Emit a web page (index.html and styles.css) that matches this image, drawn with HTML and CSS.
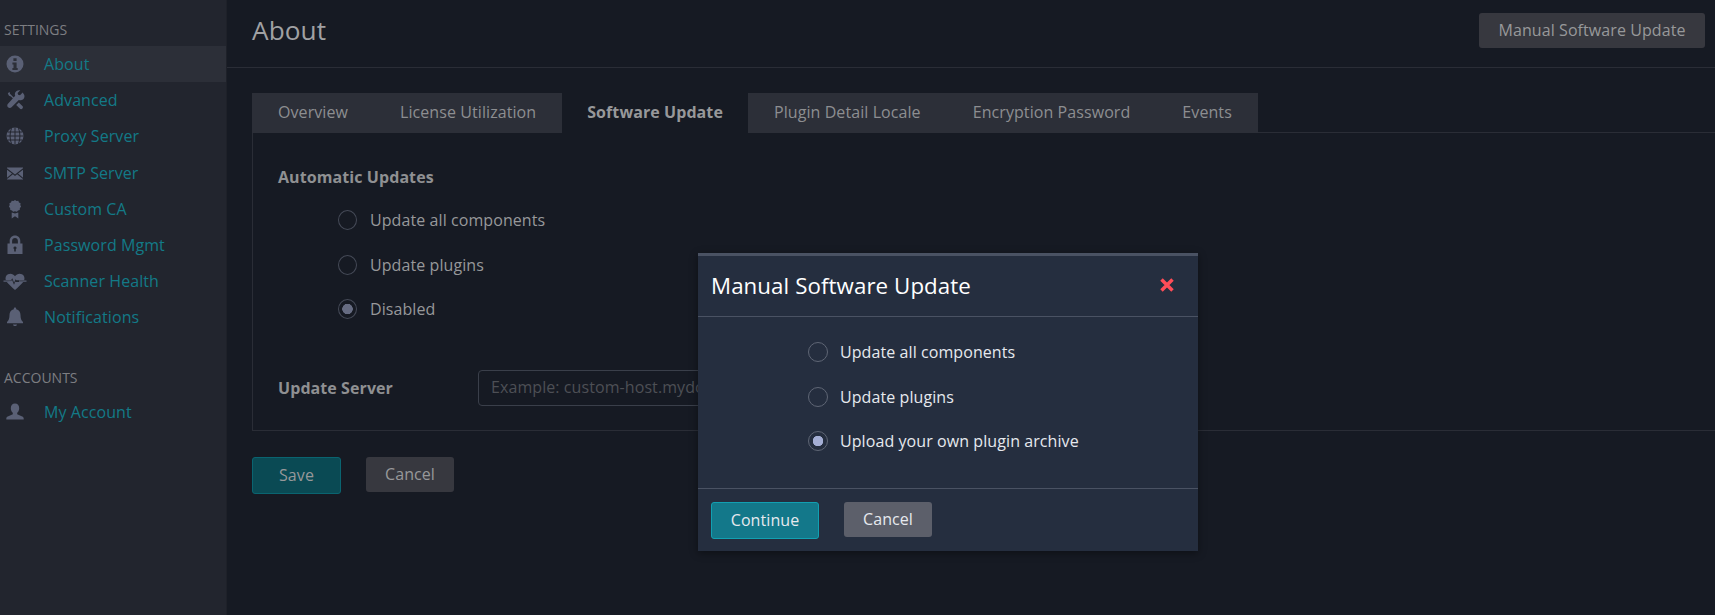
FILE: index.html
```html
<!DOCTYPE html>
<html lang="en">
<head>
<meta charset="utf-8">
<title>About</title>
<link rel="stylesheet" href="styles.css">
</head>
<body>
<div class="app">
  <aside class="sidebar">
    <div class="nav-label">SETTINGS</div>
    <nav class="nav">
      <a class="nav-item active"><svg class="nav-icon" viewBox="0 0 24 24"><path fill-rule="evenodd" d="M12 3.500a8.500 8.500 0 1 0 0 17 8.500 8.500 0 0 0 0-17zM10.400 6.200h3.200v2.800h-3.200zM9.400 10.400h4.200v5.500h1.100v2H9.400v-2h1.100v-3.500H9.400z"/></svg><span>About</span></a>
      <a class="nav-item"><svg class="nav-icon" viewBox="0 0 24 24"><path d="M6.200 4 4.800 5.400l1.200 2.400 1.900.6 3.700 3.700-1.100 1.100 1.800 1.800 1.100-1.100-1.800-1.800 1.900-1.900-1.700-1.800-1.100 1.100-3.700-3.700-.5-1.800zM19.700 4.500l-2.700 2.700-1.900-.5-.5-1.800 2.700-2.600c-2.200-.5-4.600.6-5.300 2.700-.3 1-.2 2 .2 2.800L5 15.700c-1 1-1 2.500 0 3.500s2.600.9 3.500 0l7.300-7.300c.9.400 1.900.5 2.800.2 2.200-.7 3.400-3 2.700-5.200zM15.800 14.400l-2.600 2.600 3.600 3.600c.7.700 1.900.7 2.600 0s.7-1.900 0-2.600z"/></svg><span>Advanced</span></a>
      <a class="nav-item"><svg class="nav-icon" viewBox="0 0 24 24"><circle cx="12" cy="12" r="8.500"/><path class="icon-cut" d="M12 3.500v17M8.600 4.200c-2 5-2 10.600 0 15.600M15.400 4.200c2 5 2 10.600 0 15.600M3.500 12h17M4.600 8h14.800M4.600 16h14.800"/></svg><span>Proxy Server</span></a>
      <a class="nav-item"><svg class="nav-icon" viewBox="0 0 24 24"><path d="M4 6.500h16v.7l-8 6.300-8-6.300zM4 8.800l5 3.800-5 4.100zM20 8.800l-5 3.800 5 4.100zM9.900 13.300 12 15l2.100-1.700 5.900 4.600v.6H4v-.6z"/></svg><span>SMTP Server</span></a>
      <a class="nav-item"><svg class="nav-icon" viewBox="0 0 24 24"><path d="m12 3 1.500 1 1.800-.2.700 1.600 1.600.9-.3 1.800.8 1.600-1.200 1.400-.2 1.800-1.700.5-1.100 1.300-1.900-.4-1.900.4-1.100-1.300-1.700-.5-.2-1.800-1.200-1.400.8-1.600-.3-1.800 1.600-.9.7-1.600 1.800.2z"/><path d="M8.700 15.500v6l3.300-2.300 3.300 2.300v-6l-3.300 1.100z"/></svg><span>Custom CA</span></a>
      <a class="nav-item"><svg class="nav-icon" viewBox="0 0 24 24"><path fill-rule="evenodd" d="M12 2.500c-3.200 0-5.300 2.400-5.300 5.500v2.500H4.500v10.500h15V10.500h-2.200V8c0-3.100-2.100-5.500-5.300-5.500zM12 5c1.700 0 2.900 1.300 2.900 3v2.500H9.100V8c0-1.700 1.200-3 2.900-3zM12 13.500a1.500 1.500 0 0 1 .8 2.800v2.200h-1.600v-2.200a1.500 1.500 0 0 1 .8-2.800z"/></svg><span>Password Mgmt</span></a>
      <a class="nav-item"><svg class="nav-icon" viewBox="0 0 24 24"><path d="M12 7.300C10.500 5 7.600 4 5 5.300 2.800 6.500 2 8.800 2.800 11.300H8l1.300-2 1.800 4.400 1.500-3.400.8 1H21.200c.8-2.500 0-4.800-2.200-6C16.400 4 13.500 5 12 7.300z"/><path d="M3.800 13C5.500 15.300 9 18.300 12 21c3-2.700 6.500-5.700 8.200-8h-7.400l-.4-.6-1.400 3.300-2-5-.6 1-.4.300z"/><path class="icon-line" d="M.5 12.200h7.300M16 12.200h7.500"/></svg><span>Scanner Health</span></a>
      <a class="nav-item"><svg class="nav-icon" viewBox="0 0 24 24"><path d="M12 2.500c-.7 0-1.200.5-1.200 1.200v.5C8 4.900 6.500 7 6.500 10c0 3.500-.8 5.200-2.500 7v1.200h16V17c-1.700-1.800-2.500-3.500-2.500-7 0-3-1.500-5.100-4.300-5.800v-.5c0-.7-.5-1.200-1.200-1.200zM10 19.500c.2 1 1 1.500 2 1.500s1.800-.5 2-1.500z"/></svg><span>Notifications</span></a>
    </nav>
    <div class="nav-label nav-label-spaced">ACCOUNTS</div>
    <nav class="nav">
      <a class="nav-item"><svg class="nav-icon" viewBox="0 0 24 24"><path d="M12 3.500c-2.600 0-4.200 2-4.200 4.700 0 1.900.7 3.500 2 4.500v1.500l-5 2.200c-.9.400-1.500 1.100-1.500 2.100v1h17.400v-1c0-1-.6-1.700-1.500-2.100l-5-2.200v-1.500c1.300-1 2-2.600 2-4.500 0-2.700-1.600-4.700-4.200-4.700z"/></svg><span>My Account</span></a>
    </nav>
  </aside>

  <main class="main">
    <header class="page-header">
      <h1 class="page-title">About</h1>
      <button class="btn btn-neutral btn-header" type="button">Manual Software Update</button>
    </header>
    <section class="content">
      <div class="tabs">
        <a class="tab">Overview</a>
        <a class="tab">License Utilization</a>
        <a class="tab tab-active">Software Update</a>
        <a class="tab">Plugin Detail Locale</a>
        <a class="tab">Encryption Password</a>
        <a class="tab">Events</a>
      </div>
      <div class="panel">
        <div class="field-title">Automatic Updates</div>
        <div class="radio-group">
          <label class="radio-row"><span class="radio"></span>Update all components</label>
          <label class="radio-row"><span class="radio"></span>Update plugins</label>
          <label class="radio-row"><span class="radio radio-on"></span>Disabled</label>
        </div>
        <div class="server-row">
          <div class="field-title server-label">Update Server</div>
          <input class="server-input" type="text" placeholder="Example: custom-host.mydomain.com">
        </div>
      </div>
      <div class="actions">
        <button class="btn btn-save" type="button">Save</button>
        <button class="btn btn-neutral btn-raised" type="button">Cancel</button>
      </div>
    </section>
  </main>
</div>

<div class="modal">
  <div class="modal-header">
    <h2 class="modal-title">Manual Software Update</h2>
    <svg class="modal-close" viewBox="0 0 16 16"><path d="M2.500 2.500l11 11M13.500 2.500l-11 11"/></svg>
  </div>
  <div class="modal-body">
    <label class="radio-row"><span class="radio radio-modal"></span>Update all components</label>
    <label class="radio-row"><span class="radio radio-modal"></span>Update plugins</label>
    <label class="radio-row"><span class="radio radio-modal radio-modal-on"></span>Upload your own plugin archive</label>
  </div>
  <div class="modal-footer">
    <button class="btn btn-continue" type="button">Continue</button>
    <button class="btn btn-cancel" type="button">Cancel</button>
  </div>
</div>
</body>
</html>
```

FILE: styles.css
```css
* { box-sizing: border-box; }

html, body {
  margin: 0;
  height: 100%;
  overflow: hidden;
  background: #161a23;
  font-family: "Open Sans", sans-serif;
  font-size: 16px;
  letter-spacing: 0.08px;
  color: #97989a;
}

.app { display: flex; height: 615px; }

.sidebar {
  flex: 0 0 227px;
  background: #22252e;
  border-right: 1px solid #1e2129;
  padding-top: 22px;
}

.nav-label {
  height: 16px;
  line-height: 16px;
  font-size: 14px;
  letter-spacing: 0;
  padding-left: 4px;
  margin-bottom: 8px;
  color: #7d7e82;
}
.nav-label-spaced { margin-top: 34.4px; }

.nav { display: flex; flex-direction: column; }

.nav-item {
  display: flex;
  align-items: center;
  height: 36.2px;
  padding-left: 3px;
  color: #137a87;
}
.nav-item.active { background: #2c2f38; }

.nav-icon {
  flex: none;
  width: 24px;
  height: 24px;
  margin-right: 17px;
  fill: #5a6075;
}
.icon-cut { fill: none; stroke: #22252e; stroke-width: 1; }
.icon-line { fill: none; stroke: #5a6075; stroke-width: 1.2; }

.main { flex: 1; min-width: 0; }

.page-header {
  display: flex;
  align-items: center;
  justify-content: space-between;
  height: 68px;
  padding: 0 10px 7px 25px;
  border-bottom: 1px solid #2a2d36;
}
.page-title {
  margin: 0;
  font-size: 26.2px;
  font-weight: 400;
  color: #a0a1a3;
}

.btn {
  display: block;
  height: 35px;
  padding: 0;
  border: 0;
  border-radius: 3px;
  font: 400 16px "Open Sans", sans-serif;
  letter-spacing: inherit;
  cursor: pointer;
}
.btn-neutral { width: 88px; background: #37383f; color: #97989a; }
.btn-header { width: 226px; }
.btn-raised { padding-bottom: 2px; }
.btn-save {
  width: 89px;
  height: 37px;
  padding-bottom: 2px;
  background: #0a4a54;
  border: 1px solid #0a6470;
  color: #97989a;
}
.btn-continue {
  width: 108px;
  height: 37px;
  padding-bottom: 2px;
  background: #13788a;
  border: 1px solid #12a0b2;
  color: #e6e9ee;
}
.btn-cancel { width: 88px; padding-bottom: 2px; background: #5c5f6a; color: #e6e9ee; }

.content { padding-top: 25px; padding-left: 25px; }

.tabs { display: flex; position: relative; z-index: 1; margin-bottom: -1px; width: max-content; }
.tab {
  height: 40px;
  line-height: 38px;
  padding: 0 26px;
  background: #2c2f38;
  color: #8d8e91;
  white-space: nowrap;
}
.tab-active { background: #161a23; color: #97989a; font-weight: 700; padding: 0 25px; }

.panel {
  height: 299px;
  padding: 32px 25px 0;
  border: 1px solid #2a2d36;
  border-right: 0;
}

.field-title { line-height: 24px; font-weight: 700; color: #8f9092; }

.radio-group { padding: 9px 0 0 60px; }

.radio-row {
  display: flex;
  align-items: center;
  height: 44.5px;
}

.radio {
  flex: none;
  width: 19px;
  height: 20px;
  margin-right: 13px;
  border: 1px solid #454a57;
  border-radius: 50%;
}
.radio-on { background: radial-gradient(circle, #666c82 0 5px, transparent 5.5px); }

.server-row { display: flex; align-items: center; margin-top: 38px; }
.server-label { flex: 0 0 200px; }
.server-input {
  width: 500px;
  height: 36px;
  padding: 0 12px 2px;
  border: 1px solid #3a3f4a;
  border-radius: 4px;
  background: transparent;
  font: 400 16px "Open Sans", sans-serif;
  letter-spacing: inherit;
  outline: none;
}
.server-input::placeholder { color: #4d4f55; opacity: 1; }

.actions { display: flex; align-items: flex-start; gap: 25px; margin-top: 26px; }

.modal {
  position: absolute;
  left: 698px;
  top: 253px;
  width: 500px;
  height: 298px;
  background: #252e3f;
  border-top: 3px solid #4a5263;
  box-shadow: 0 2px 8px rgba(0, 0, 0, 0.4);
  color: #e6e9ee;
}
.modal-header {
  display: flex;
  align-items: center;
  justify-content: space-between;
  height: 61px;
  padding: 0 23px 2px 13px;
  border-bottom: 1px solid #4a5263;
}
.modal-title { margin: 0; font-size: 22.3px; font-weight: 400; color: #fff; }
.modal-close { width: 16px; height: 16px; fill: none; stroke: #ff4d58; stroke-width: 3.5; }

.modal-body { height: 171px; padding: 13px 0 0 110px; }
.radio-modal { width: 20px; margin-right: 12px; border-color: #5f6675; }
.radio-modal-on { background: radial-gradient(circle, #a4aed4 0 5px, transparent 5.5px); }

.modal-footer {
  display: flex;
  align-items: flex-start;
  gap: 25px;
  padding: 13px;
  border-top: 1px solid #4a5263;
}
```
